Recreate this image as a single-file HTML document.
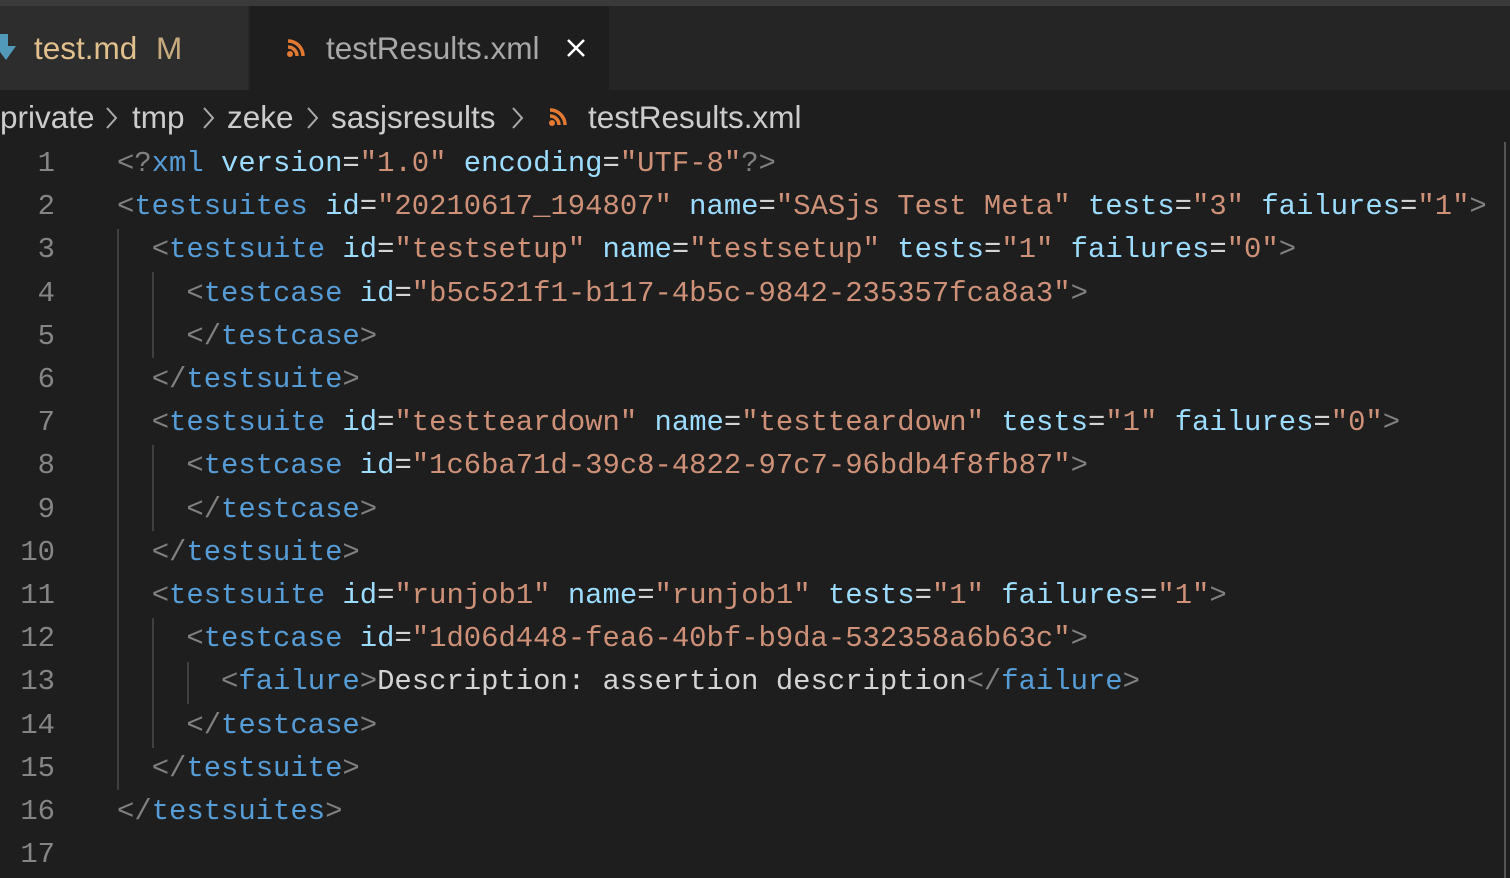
<!DOCTYPE html>
<html><head><meta charset="utf-8"><style>
body{margin:0;width:1510px;height:878px;background:#1e1e1e;overflow:hidden;position:relative;font-family:"Liberation Sans",sans-serif}
.top{position:absolute;left:0;top:0;width:1510px;height:6px;background:#3a3a3a}
.tabs{position:absolute;left:0;top:6px;width:1510px;height:84px;background:#252526}
.tab1{position:absolute;left:0;top:0;width:248px;height:84px;background:#2d2d2d}
.tab2{position:absolute;left:250px;top:0;width:359px;height:84px;background:#1e1e1e}
.t{position:absolute;font-size:31.5px;top:24px;white-space:nowrap;line-height:36px}
.b{position:absolute;top:99px;font-size:31.5px;line-height:36px;color:#cccccc;white-space:nowrap}
.sep{position:absolute;top:104px}
pre{position:absolute;margin:0;top:142px;font-family:"Liberation Mono",monospace;font-size:28.9px;line-height:43.2px}
.ln{left:0;width:55px;text-align:right;color:#858585}
.code{left:117px;color:#d4d4d4}
.p{color:#808080}.g{color:#569cd6}.a{color:#9cdcfe}.s2{color:#ce9178}.e{color:#d4d4d4}
.guide{position:absolute;width:2px;background:#404040}
.sb{position:absolute;left:1504px;top:142px;width:2px;height:736px;background:#555}
</style></head><body>
<div class="top"></div>
<div class="tabs">
<div class="tab1"><svg style="position:absolute;left:0;top:28px" width="18" height="28"><path d="M0 0h8v12h8L6 26 0 18z" fill="#519aba"/></svg><span class="t" style="left:34px;color:#e2c08d">test.md</span><span class="t" style="left:156px;color:#e2c08d;opacity:.85">M</span></div>
<div class="tab2"><svg style="position:absolute;left:36px;top:32px" width="20" height="20"><circle cx="4" cy="16" r="3" fill="#e37933"/><path d="M2 9a9 9 0 0 1 9 9M2 3a15 15 0 0 1 15 15" stroke="#e37933" stroke-width="3.5" fill="none"/></svg><span class="t" style="left:76px;color:#a8a8a8">testResults.xml</span><svg style="position:absolute;left:316px;top:32px" width="20" height="20"><path d="M2 2L18 18M18 2L2 18" stroke="#fff" stroke-width="2.5"/></svg></div>
</div>
<span class="b" style="left:0">private</span>
<svg class="sep" style="left:104px" width="14" height="28"><path d="M3 4l9 10-9 10" stroke="#aaa" stroke-width="2" fill="none"/></svg>
<span class="b" style="left:132px">tmp</span>
<svg class="sep" style="left:201px" width="14" height="28"><path d="M3 4l9 10-9 10" stroke="#aaa" stroke-width="2" fill="none"/></svg>
<span class="b" style="left:227px">zeke</span>
<svg class="sep" style="left:305px" width="14" height="28"><path d="M3 4l9 10-9 10" stroke="#aaa" stroke-width="2" fill="none"/></svg>
<span class="b" style="left:331px">sasjsresults</span>
<svg class="sep" style="left:510px" width="14" height="28"><path d="M3 4l9 10-9 10" stroke="#aaa" stroke-width="2" fill="none"/></svg>
<svg style="position:absolute;left:548px;top:107px" width="20" height="20"><circle cx="4" cy="16" r="3" fill="#e37933"/><path d="M2 9a9 9 0 0 1 9 9M2 3a15 15 0 0 1 15 15" stroke="#e37933" stroke-width="3.5" fill="none"/></svg>
<span class="b" style="left:588px">testResults.xml</span>
<div class="guide" style="left:117px;top:229px;height:561px"></div>
<div class="guide" style="left:152px;top:272px;height:86px"></div>
<div class="guide" style="left:152px;top:445px;height:86px"></div>
<div class="guide" style="left:152px;top:618px;height:130px"></div>
<div class="guide" style="left:187px;top:662px;height:42px"></div>
<div class="sb"></div>
<pre class="ln">1
2
3
4
5
6
7
8
9
10
11
12
13
14
15
16
17</pre>
<pre class="code"><span class="p">&lt;?</span><span class="g">xml</span> <span class="a">version</span><span class="e">=</span><span class="s2">"1.0"</span> <span class="a">encoding</span><span class="e">=</span><span class="s2">"UTF-8"</span><span class="p">?&gt;</span>
<span class="p">&lt;</span><span class="g">testsuites</span> <span class="a">id</span>=<span class="s2">"20210617_194807"</span> <span class="a">name</span>=<span class="s2">"SASjs Test Meta"</span> <span class="a">tests</span>=<span class="s2">"3"</span> <span class="a">failures</span>=<span class="s2">"1"</span><span class="p">&gt;</span>
  <span class="p">&lt;</span><span class="g">testsuite</span> <span class="a">id</span>=<span class="s2">"testsetup"</span> <span class="a">name</span>=<span class="s2">"testsetup"</span> <span class="a">tests</span>=<span class="s2">"1"</span> <span class="a">failures</span>=<span class="s2">"0"</span><span class="p">&gt;</span>
    <span class="p">&lt;</span><span class="g">testcase</span> <span class="a">id</span>=<span class="s2">"b5c521f1-b117-4b5c-9842-235357fca8a3"</span><span class="p">&gt;</span>
    <span class="p">&lt;/</span><span class="g">testcase</span><span class="p">&gt;</span>
  <span class="p">&lt;/</span><span class="g">testsuite</span><span class="p">&gt;</span>
  <span class="p">&lt;</span><span class="g">testsuite</span> <span class="a">id</span>=<span class="s2">"testteardown"</span> <span class="a">name</span>=<span class="s2">"testteardown"</span> <span class="a">tests</span>=<span class="s2">"1"</span> <span class="a">failures</span>=<span class="s2">"0"</span><span class="p">&gt;</span>
    <span class="p">&lt;</span><span class="g">testcase</span> <span class="a">id</span>=<span class="s2">"1c6ba71d-39c8-4822-97c7-96bdb4f8fb87"</span><span class="p">&gt;</span>
    <span class="p">&lt;/</span><span class="g">testcase</span><span class="p">&gt;</span>
  <span class="p">&lt;/</span><span class="g">testsuite</span><span class="p">&gt;</span>
  <span class="p">&lt;</span><span class="g">testsuite</span> <span class="a">id</span>=<span class="s2">"runjob1"</span> <span class="a">name</span>=<span class="s2">"runjob1"</span> <span class="a">tests</span>=<span class="s2">"1"</span> <span class="a">failures</span>=<span class="s2">"1"</span><span class="p">&gt;</span>
    <span class="p">&lt;</span><span class="g">testcase</span> <span class="a">id</span>=<span class="s2">"1d06d448-fea6-40bf-b9da-532358a6b63c"</span><span class="p">&gt;</span>
      <span class="p">&lt;</span><span class="g">failure</span><span class="p">&gt;</span>Description: assertion description<span class="p">&lt;/</span><span class="g">failure</span><span class="p">&gt;</span>
    <span class="p">&lt;/</span><span class="g">testcase</span><span class="p">&gt;</span>
  <span class="p">&lt;/</span><span class="g">testsuite</span><span class="p">&gt;</span>
<span class="p">&lt;/</span><span class="g">testsuites</span><span class="p">&gt;</span>
</pre>
</body></html>
